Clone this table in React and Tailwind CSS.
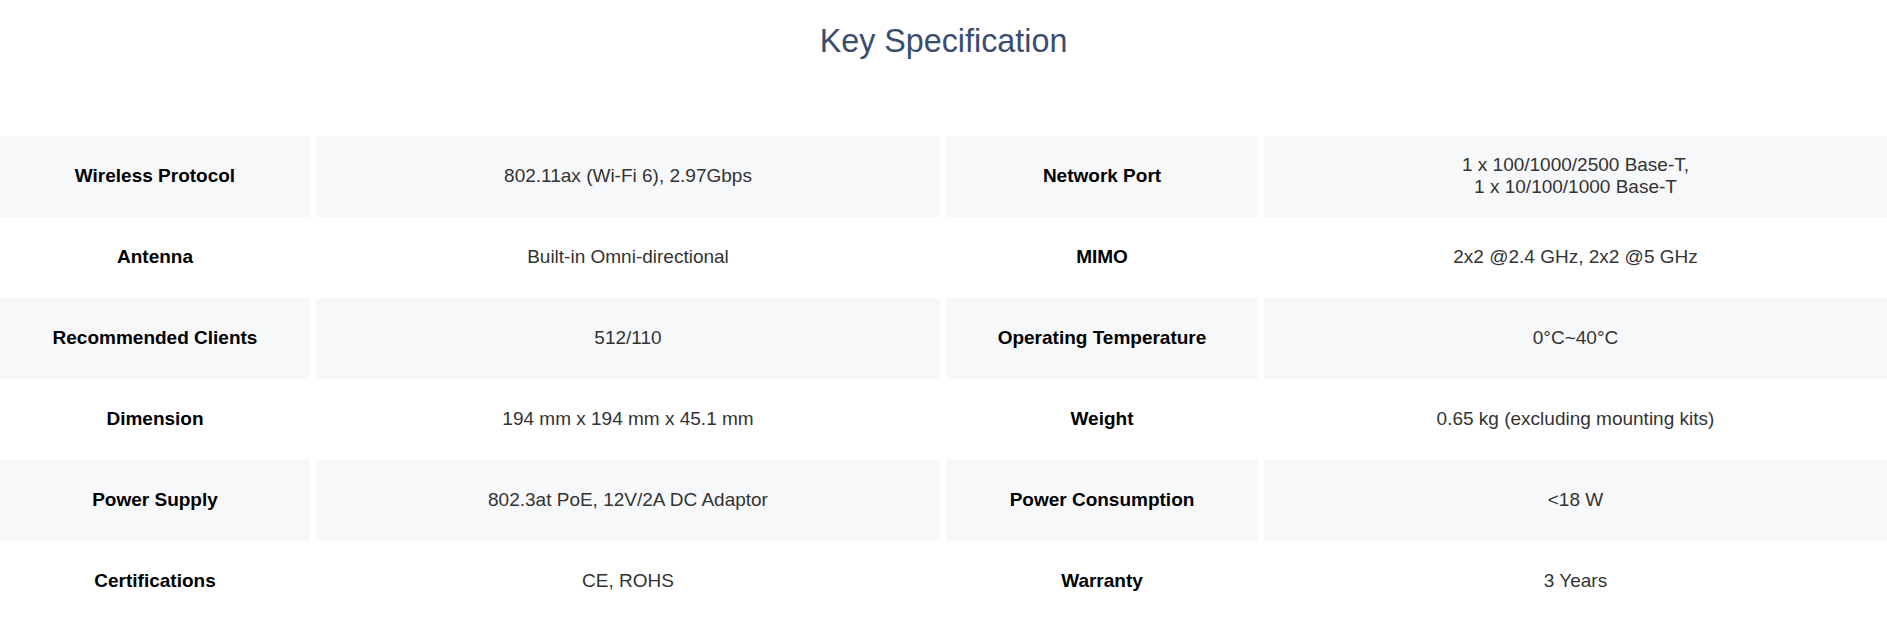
const SPECS = [
  ['Wireless Protocol', '802.11ax (Wi-Fi 6), 2.97Gbps', 'Network Port', ['1 x 100/1000/2500 Base-T,', '1 x 10/100/1000 Base-T']],
  ['Antenna', 'Built-in Omni-directional', 'MIMO', '2x2 @2.4 GHz, 2x2 @5 GHz'],
  ['Recommended Clients', '512/110', 'Operating Temperature', '0°C~40°C'],
  ['Dimension', '194 mm x 194 mm x 45.1 mm', 'Weight', '0.65 kg (excluding mounting kits)'],
  ['Power Supply', '802.3at PoE, 12V/2A DC Adaptor', 'Power Consumption', '<18 W'],
  ['Certifications', 'CE, ROHS', 'Warranty', '3 Years'],
]

function Cell({ children, bold, shaded }) {
  return (
    <div
      className={`h-[81px] pb-[2px] flex flex-col items-center justify-center text-center text-[19px] leading-[22px] ${
        bold ? 'font-bold text-black' : 'text-[#333333]'
      } ${shaded ? 'bg-[#f7f8fa]' : 'bg-white'}`}
    >
      {Array.isArray(children) ? children.map((line, i) => <span key={i}>{line}</span>) : children}
    </div>
  )
}

export default function App() {
  return (
    <div className="w-full min-h-[639px] bg-white pt-[22px]" style={{ fontFamily: '"Liberation Sans", Arial, sans-serif' }}>
      <h2 className="text-center text-[32.3px] leading-[38px] text-[#3a4d6f] mb-[76px]">Key Specification</h2>

      <div className="grid grid-cols-[310px_624px_312px_1fr] gap-x-[6px]">
        {SPECS.map((row, i) => {
          const shaded = i % 2 === 0
          return [
            <Cell key={`${i}-a`} bold shaded={shaded}>{row[0]}</Cell>,
            <Cell key={`${i}-b`} shaded={shaded}>{row[1]}</Cell>,
            <Cell key={`${i}-c`} bold shaded={shaded}>{row[2]}</Cell>,
            <Cell key={`${i}-d`} shaded={shaded}>{row[3]}</Cell>,
          ]
        })}
      </div>
    </div>
  )
}
